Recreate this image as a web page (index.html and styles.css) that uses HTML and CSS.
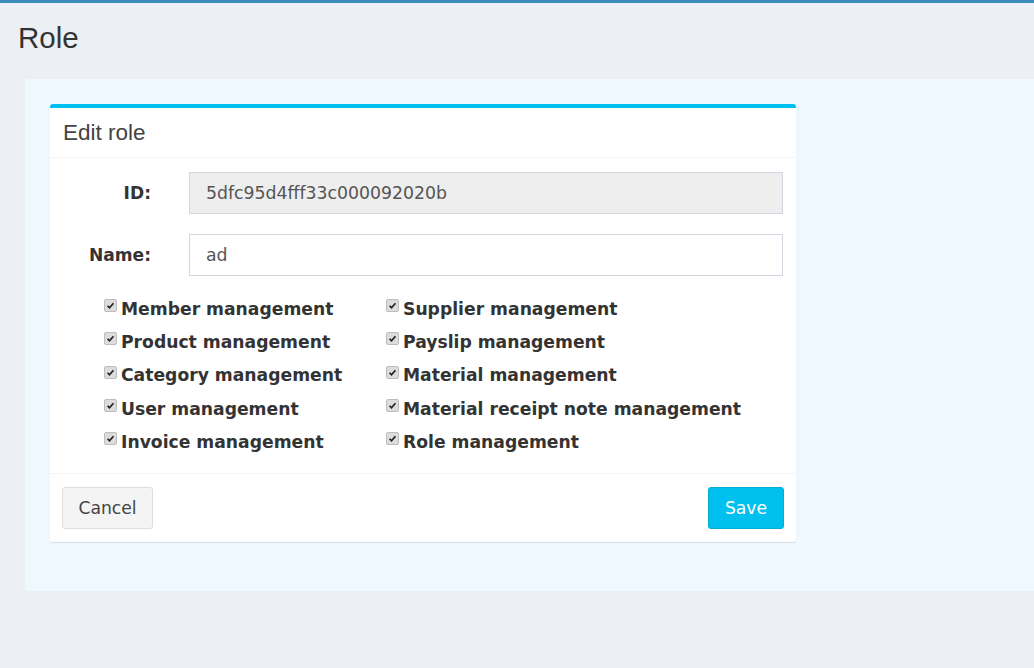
FILE: index.html
```
<!DOCTYPE html>
<html>
<head>
<meta charset="utf-8">
<link rel="stylesheet" href="styles.css">
</head>
<body>
<div class="page">
  <h1 class="page-title">Role</h1>
  <div class="panel">
    <div class="box">
      <div class="box-header">Edit role</div>
      <div class="box-body">
        <div class="fields">
          <div class="form-row">
            <label class="form-label">ID:</label>
            <div class="input input-disabled">5dfc95d4fff33c000092020b</div>
          </div>
          <div class="form-row">
            <label class="form-label">Name:</label>
            <div class="input">ad</div>
          </div>
        </div>
        <div class="perms">
          <div class="perm"><span class="cb"><svg viewBox="0 0 13 13" width="13" height="13"><path d="M3 6.8 L5.3 9.2 L10 3.8" fill="none" stroke="#222" stroke-width="2"/></svg></span>Member management</div>
          <div class="perm"><span class="cb"><svg viewBox="0 0 13 13" width="13" height="13"><path d="M3 6.8 L5.3 9.2 L10 3.8" fill="none" stroke="#222" stroke-width="2"/></svg></span>Supplier management</div>
          <div class="perm"><span class="cb"><svg viewBox="0 0 13 13" width="13" height="13"><path d="M3 6.8 L5.3 9.2 L10 3.8" fill="none" stroke="#222" stroke-width="2"/></svg></span>Product management</div>
          <div class="perm"><span class="cb"><svg viewBox="0 0 13 13" width="13" height="13"><path d="M3 6.8 L5.3 9.2 L10 3.8" fill="none" stroke="#222" stroke-width="2"/></svg></span>Payslip management</div>
          <div class="perm"><span class="cb"><svg viewBox="0 0 13 13" width="13" height="13"><path d="M3 6.8 L5.3 9.2 L10 3.8" fill="none" stroke="#222" stroke-width="2"/></svg></span>Category management</div>
          <div class="perm"><span class="cb"><svg viewBox="0 0 13 13" width="13" height="13"><path d="M3 6.8 L5.3 9.2 L10 3.8" fill="none" stroke="#222" stroke-width="2"/></svg></span>Material management</div>
          <div class="perm"><span class="cb"><svg viewBox="0 0 13 13" width="13" height="13"><path d="M3 6.8 L5.3 9.2 L10 3.8" fill="none" stroke="#222" stroke-width="2"/></svg></span>User management</div>
          <div class="perm"><span class="cb"><svg viewBox="0 0 13 13" width="13" height="13"><path d="M3 6.8 L5.3 9.2 L10 3.8" fill="none" stroke="#222" stroke-width="2"/></svg></span>Material receipt note management</div>
          <div class="perm"><span class="cb"><svg viewBox="0 0 13 13" width="13" height="13"><path d="M3 6.8 L5.3 9.2 L10 3.8" fill="none" stroke="#222" stroke-width="2"/></svg></span>Invoice management</div>
          <div class="perm"><span class="cb"><svg viewBox="0 0 13 13" width="13" height="13"><path d="M3 6.8 L5.3 9.2 L10 3.8" fill="none" stroke="#222" stroke-width="2"/></svg></span>Role management</div>
        </div>
      </div>
      <div class="box-footer">
        <button class="btn btn-default">Cancel</button>
        <button class="btn btn-info">Save</button>
      </div>
    </div>
  </div>
</div>
</body>
</html>
```
FILE: styles.css
```
html, body {
  margin: 0;
  padding: 0;
}
body {
  background: #ecf0f5;
  border-top: 3px solid #3c8dbc;
  font-family: "DejaVu Sans", Verdana, sans-serif;
  color: #333;
  height: 665px;
  overflow: hidden;
}
.page {
  display: flex;
  flex-direction: column;
}
.page-title {
  margin: 0;
  padding: 17px 0 0 18px;
  height: 76px;
  box-sizing: border-box;
  font-family: "Liberation Sans", Arial, sans-serif;
  font-weight: normal;
  font-size: 29.5px;
  line-height: 36px;
  color: #333;
}
.panel {
  margin-left: 25px;
  height: 512px;
  background: #eef8fe;
  border-radius: 0 0 0 4px;
  padding: 25px 0 0 25px;
  box-sizing: border-box;
}
.box {
  width: 746px;
  background: #fff;
  border-top: 4px solid #00c0ef;
  border-radius: 3px;
  box-shadow: 0 1px 1px rgba(0,0,0,0.1);
}
.box-header {
  height: 50px;
  box-sizing: border-box;
  padding: 13px 13px 0 13px;
  font-family: "Liberation Sans", Arial, sans-serif;
  font-size: 22.5px;
  line-height: 24px;
  color: #444;
  border-bottom: 1px solid #f4f4f4;
}
.box-body {
  padding: 14px 13px 15px 0;
}
.fields {
  display: flex;
  flex-direction: column;
  gap: 20px;
}
.form-row {
  display: grid;
  grid-template-columns: 101px 1fr;
  column-gap: 38px;
  align-items: center;
}
.form-label {
  text-align: right;
  font-weight: bold;
  font-size: 17.1px;
  color: #333;
}
.input {
  height: 42px;
  box-sizing: border-box;
  border: 1px solid #d2d6de;
  padding: 0 16px;
  font-size: 17.3px;
  line-height: 40px;
  color: #555;
  background: #fff;
}
.input-disabled {
  background: #eee;
}
.perms {
  display: grid;
  grid-template-columns: 282px 1fr;
  padding-left: 54px;
  margin-top: 16px;
}
.perm {
  display: flex;
  align-items: center;
  height: 33.3px;
  font-weight: bold;
  font-size: 17.2px;
  color: #333;
  white-space: nowrap;
}
.cb {
  width: 13px;
  height: 13px;
  border-radius: 2px;
  background: #dcdcdc;
  border: 1px solid #bdbdbd;
  box-sizing: border-box;
  display: inline-flex;
  align-items: center;
  justify-content: center;
  margin-right: 4px;
  position: relative;
  top: -3px;
}
.cb svg {
  display: block;
  width: 11px;
  height: 11px;
}
.box-footer {
  display: flex;
  justify-content: space-between;
  padding: 13px 12px 13px 12px;
  border-top: 1px solid #f4f4f4;
}
.btn {
  height: 42px;
  box-sizing: border-box;
  border-radius: 3px;
  font-family: "DejaVu Sans", Verdana, sans-serif;
  font-size: 17.2px;
  padding: 0 10px;
  cursor: pointer;
}
.btn-default {
  width: 91px;
  background: #f4f4f4;
  border: 1px solid #ddd;
  color: #444;
}
.btn-info {
  width: 76px;
  background: #00c0ef;
  border: 1px solid #00acd6;
  color: #fff;
}
```
